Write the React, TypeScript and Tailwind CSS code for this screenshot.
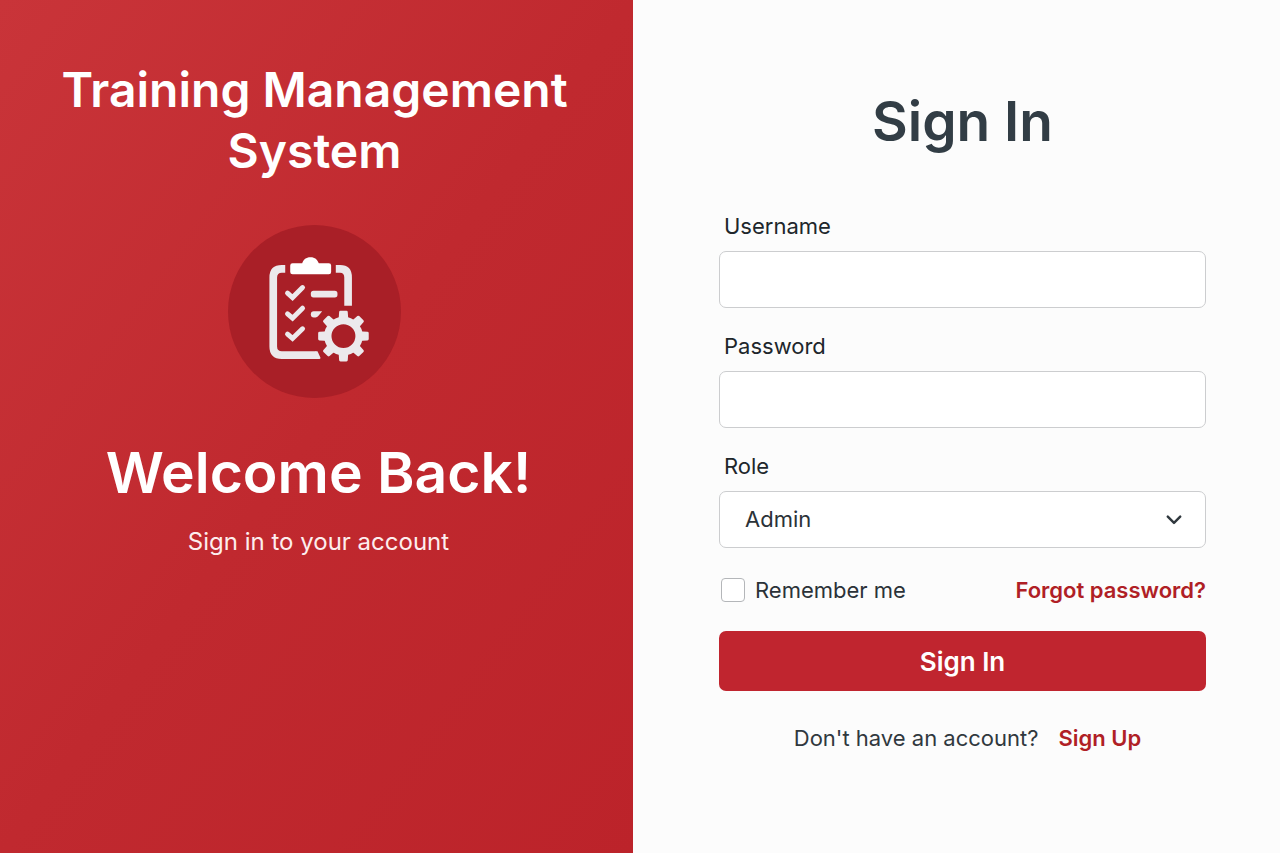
import type { ReactNode } from "react";

const GEAR_ANGLES = [0, 45, 90, 135, 180, 225, 270, 315];

function ClipboardGear() {
  return (
    <svg viewBox="23 29 520 520" className="size-[173px]" role="img" aria-label="Checklist with gear">
      <circle cx="283" cy="289" r="260" fill="#a91f27" />
      <g fill="none" stroke="#ece9ec" strokeWidth="23">
        <path d="M195 161H185Q159 161 159 187V394Q159 420 185 420H288" />
        <path d="M347 161H360Q384 161 384 187V272" />
      </g>
      <path d="M286 408.5H292L301 428Q302 431.5 298 431.5H286Z" fill="#ece9ec" />
      <path
        d="M217 144H246C250 133 257 126 271 126C285 126 291 133 296 144H326Q333 144 333 151V170Q333 177 326 177H217Q210 177 210 170V151Q210 144 217 144Z"
        fill="#ffffff"
      />
      <g fill="none" stroke="#ece9ec" strokeWidth="15" strokeLinecap="round" strokeLinejoin="miter">
        <path d="M202 234L217 247L247 217" />
        <path d="M202 296L217 309L247 279" />
        <path d="M202 357L217 370L247 341" />
      </g>
      <rect x="272" y="227" width="80" height="20" rx="8" fill="#ece9ec" />
      <path d="M281 288H306L295 302Q291 307 286 307H281Q272 307 272 298Q272 288 281 288Z" fill="#ece9ec" />
      <g fill="#ece9ec">
        {GEAR_ANGLES.map((angle) => (
          <path
            key={angle}
            d="M355 320L357 291Q357 287 361 287H379Q383 287 383 291L385 320Z"
            transform={`rotate(${angle} 370 363)`}
          />
        ))}
      </g>
      <circle cx="370" cy="363" r="47" fill="none" stroke="#ece9ec" strokeWidth="22" />
    </svg>
  );
}

function Field({ id, label, children }: { id: string; label: string; children: ReactNode }) {
  return (
    <div className="flex flex-col gap-[10px]">
      <label htmlFor={id} className="pl-[5px] text-[22px] leading-[30px] text-[#20262b]">
        {label}
      </label>
      {children}
    </div>
  );
}

export default function App() {
  return (
    <div className="grid min-h-screen grid-cols-[633fr_647fr] bg-[#fcfcfc] font-['Inter','Liberation_Sans',sans-serif]">
      <section className="flex flex-col items-center bg-linear-to-br from-[#c93439] via-[#c0292f] to-[#bc232a] pt-[59px] pr-[36px] pl-[32px] text-center text-white">
        <h1 className="max-w-[540px] text-[48px] leading-[61px] font-semibold">Training Management System</h1>
        <div className="mt-[44px]">
          <ClipboardGear />
        </div>
        <div className="mt-[40px] pl-[8px]">
          <h2 className="text-[57px] leading-[70px] font-semibold">Welcome Back!</h2>
          <p className="mt-[18px] text-[24px] leading-[32px] text-[#fdeeee]">Sign in to your account</p>
        </div>
      </section>

      <main className="pt-[86px] pr-[74px] pl-[86px]">
        <h2 className="text-center text-[55px] leading-[70px] font-semibold text-[#323d45]">Sign In</h2>
        <form className="mt-[55px] flex flex-col" onSubmit={(e) => e.preventDefault()}>
          <div className="flex flex-col gap-[23px]">
            <Field id="username" label="Username">
              <input
                id="username"
                type="text"
                className="h-[57px] w-full rounded-[7px] border border-[#cccdcf] bg-white px-[25px] text-[22px] text-[#2b3238]"
              />
            </Field>
            <Field id="password" label="Password">
              <input
                id="password"
                type="password"
                className="h-[57px] w-full rounded-[7px] border border-[#cccdcf] bg-white px-[25px] text-[22px] text-[#2b3238]"
              />
            </Field>
            <Field id="role" label="Role">
              <div className="relative">
                <select
                  id="role"
                  className="h-[57px] w-full appearance-none rounded-[7px] border border-[#cccdcf] bg-white px-[25px] text-[22px] text-[#2b3238]"
                >
                  <option>Admin</option>
                </select>
                <svg
                  viewBox="0 0 16 10"
                  className="pointer-events-none absolute top-[24px] right-[24px] h-[10px] w-[16px]"
                  fill="none"
                  stroke="#30383e"
                  strokeWidth="2.4"
                  strokeLinecap="round"
                  strokeLinejoin="round"
                  aria-hidden="true"
                >
                  <path d="M1.8 1.6L8 7.9L14.2 1.6" />
                </svg>
              </div>
            </Field>
          </div>
          <div className="mt-[27px] flex items-center justify-between text-[22px] leading-[30px]">
            <label className="flex items-center gap-[10px] pl-[2px] text-[#2b3238]">
              <input
                type="checkbox"
                className="size-[24px] appearance-none rounded-[4px] border border-[#b4b6b9] bg-white checked:bg-[#c0252f]"
              />
              Remember me
            </label>
            <a href="#forgot" className="font-semibold text-[#b01f26]">
              Forgot password?
            </a>
          </div>
          <button
            type="submit"
            className="mt-[26px] h-[60px] w-full rounded-[7px] bg-[#c0252f] text-[26px] font-semibold text-white"
          >
            Sign In
          </button>
        </form>
        <p className="mt-[32px] flex justify-center gap-[20px] pl-[10px] text-[22px] leading-[30px] text-[#30383e]">
          Don't have an account?
          <a href="#signup" className="font-semibold text-[#b01f26]">
            Sign Up
          </a>
        </p>
      </main>
    </div>
  );
}
